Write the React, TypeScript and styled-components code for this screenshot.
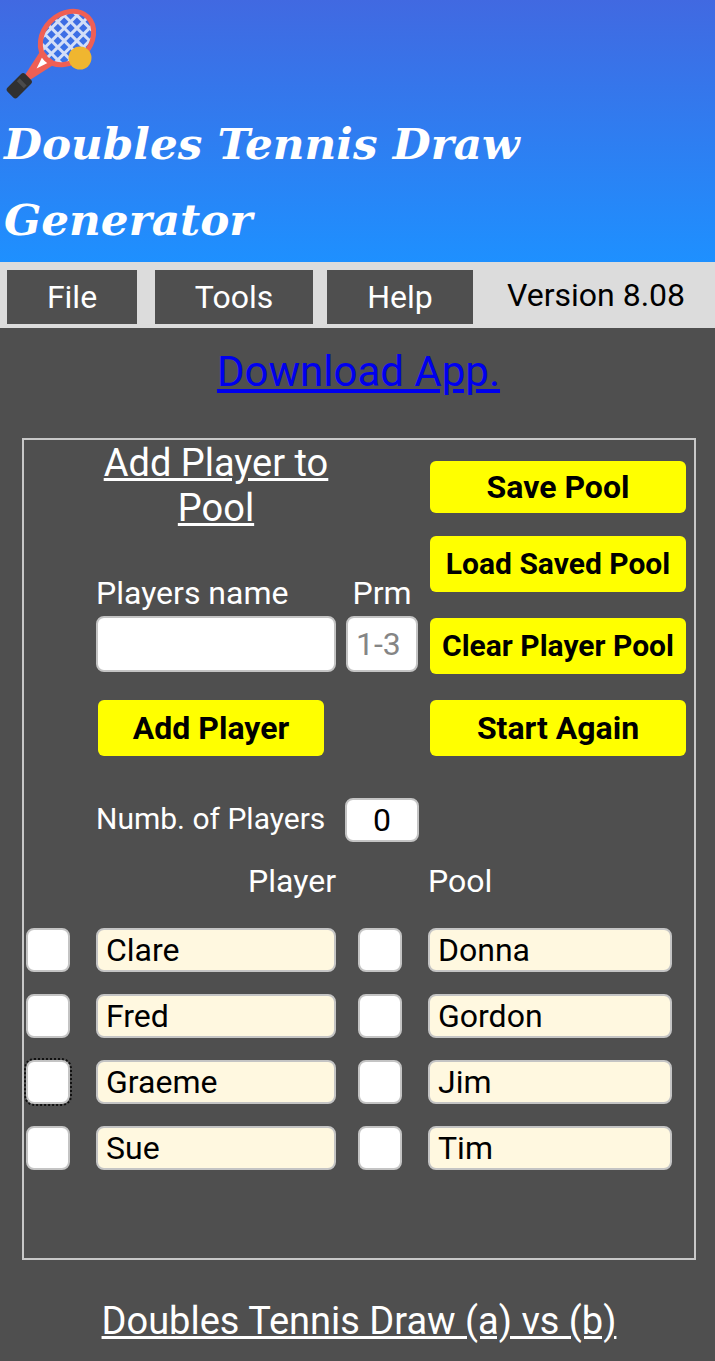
import React from "react";
import styled, { createGlobalStyle } from "styled-components";

const GlobalStyle = createGlobalStyle`
  html, body {
    margin: 0;
    padding: 0;
    background: #4f4f4f;
  }
  * {
    box-sizing: border-box;
  }
`;

const Page = styled.div`
  width: 715px;
  height: 1361px;
  overflow: hidden;
  background: #4f4f4f;
  font-family: Roboto, sans-serif;
  color: #fff;
`;

const Header = styled.header`
  height: 262px;
  padding: 6px 0 0 4px;
  background: linear-gradient(#4169e1, #1e90ff);
`;

const Logo = styled.svg`
  display: block;
  width: 100px;
  height: 94px;
  filter: blur(0.6px);
`;

const Title = styled.h1`
  margin: 6px 0 0;
  width: 600px;
  font-family: "DejaVu Serif", serif;
  font-size: 43.7px;
  font-weight: 700;
  font-style: italic;
  line-height: 76px;
  color: #fff;
`;

const MenuBar = styled.nav`
  display: flex;
  height: 66px;
  padding: 8px 0 0 7px;
  background: #dcdcdc;
`;

const MenuButton = styled.div<{ $width: number; $gap: number }>`
  display: flex;
  align-items: center;
  justify-content: center;
  width: ${({ $width }) => $width}px;
  height: 54px;
  margin-right: ${({ $gap }) => $gap}px;
  background: #4f4f4f;
  color: #fff;
  font-size: 32px;
`;

const Version = styled.div`
  margin: 0 0 0 34px;
  line-height: 50px;
  font-size: 32px;
  color: #000;
`;

const DownloadRow = styled.div`
  height: 110px;
  padding: 17px 0 0 2px;
  text-align: center;
`;

const DownloadLink = styled.a`
  font-size: 42px;
  line-height: 54px;
  color: #0000ee;
  text-decoration: underline;
`;

const Panel = styled.section`
  width: 674px;
  height: 822px;
  margin-left: 22px;
  border: 2px solid #c8c8c8;
`;

const TopArea = styled.div`
  display: flex;
  padding-left: 72px;
`;

const LeftColumn = styled.div`
  width: 322px;
`;

const PanelHeading = styled.h2`
  width: 240px;
  height: 130px;
  margin: 0;
  padding-top: 1px;
  font-size: 38px;
  font-weight: 400;
  line-height: 45px;
  text-align: center;
  text-decoration: underline;
`;

const NameGrid = styled.div`
  display: grid;
  grid-template-columns: 240px 72px;
  column-gap: 10px;
`;

const FieldLabel = styled.label<{ $center?: boolean }>`
  padding-top: 1px;
  font-size: 32px;
  line-height: 44px;
  height: 46px;
  text-align: ${({ $center }) => ($center ? "center" : "left")};
`;

const TextBox = styled.input<{ $tone?: "white" | "cream"; $center?: boolean }>`
  display: block;
  width: 100%;
  height: 100%;
  margin: 0;
  padding: 0 8px;
  border: 2px solid #c4c4c4;
  border-radius: 8px;
  outline: none;
  background: ${({ $tone }) => ($tone === "cream" ? "#fff8e0" : "#fff")};
  color: #000;
  font-family: Roboto, sans-serif;
  font-size: 32px;
  text-align: ${({ $center }) => ($center ? "center" : "left")};

  &::placeholder {
    color: #858585;
    opacity: 1;
  }
`;

const NameField = styled.div`
  height: 56px;
`;

const YellowButton = styled.button<{ $height?: number; $top?: number; $width?: number; $small?: boolean }>`
  display: block;
  width: ${({ $width }) => ($width ? `${$width}px` : "100%")};
  height: ${({ $height }) => $height ?? 56}px;
  margin: ${({ $top }) => $top ?? 26}px 0 0;
  padding: 0 0 ${({ $small }) => ($small ? 2 : 0)}px;
  border: none;
  border-radius: 6px;
  background: #ffff00;
  color: #000;
  font-family: Roboto, sans-serif;
  font-size: ${({ $small }) => ($small ? 30 : 32)}px;
  font-weight: 700;
`;

const AddPlayerWrap = styled.div`
  padding-left: 2px;
`;

const RightColumn = styled.div`
  width: 256px;
  margin-left: 12px;
`;

const CountRow = styled.div`
  display: flex;
  align-items: center;
  height: 44px;
  margin: 42px 0 0 72px;
`;

const CountLabel = styled.div`
  width: 249px;
  padding-bottom: 4px;
  font-size: 30px;
`;

const CountBox = styled.div`
  width: 74px;
  height: 44px;
`;

const ColumnLabels = styled.div`
  display: grid;
  grid-template-columns: 312px 180px;
  height: 44px;
  margin-top: 17px;
  font-size: 32px;
  line-height: 44px;
`;

const PlayerLabel = styled.div`
  text-align: right;
`;

const PoolLabel = styled.div`
  padding-left: 92px;
  width: 300px;
`;

const PlayerGrid = styled.div`
  display: grid;
  grid-template-columns: 44px 244px 44px 248px;
  grid-auto-rows: 44px;
  column-gap: 22px;
  row-gap: 22px;
  margin: 25px 0 0 2px;
`;

const TickBox = styled.div<{ $focused?: boolean }>`
  width: 44px;
  height: 44px;
  border: 2px solid #c4c4c4;
  border-radius: 8px;
  background: #fff;
  outline: ${({ $focused }) => ($focused ? "2px dotted #111" : "none")};
  outline-offset: 0;
`;

const PlayerCell = styled.div`
  margin-left: 4px;
`;

const BottomHeading = styled.h2`
  margin: 34px 0 0;
  padding-left: 3px;
  font-size: 38px;
  font-weight: 400;
  line-height: 54px;
  text-align: center;
  text-decoration: underline;
`;

const rows = [
  { left: "Clare", right: "Donna" },
  { left: "Fred", right: "Gordon" },
  { left: "Graeme", right: "Jim", focused: true },
  { left: "Sue", right: "Tim" },
];

const RacketLogo = () => (
  <Logo viewBox="0 0 100 94">
    <defs>
      <clipPath id="racket-head">
        <ellipse cx="63" cy="32" rx="22" ry="28" />
      </clipPath>
    </defs>
    <g transform="rotate(45 63 32)">
      <path d="M53 58 L59.5 88 L66.5 88 L73 58 Z" fill="#ef5f54" />
      <path d="M59 63 L63 75 L67 63 Z" fill="#fff" />
      <g clipPath="url(#racket-head)" stroke="#d3def7" strokeWidth="3">
        <line x1="45" y1="0" x2="45" y2="64" />
        <line x1="54" y1="0" x2="54" y2="64" />
        <line x1="63" y1="0" x2="63" y2="64" />
        <line x1="72" y1="0" x2="72" y2="64" />
        <line x1="81" y1="0" x2="81" y2="64" />
        <line x1="38" y1="9" x2="88" y2="9" />
        <line x1="38" y1="18" x2="88" y2="18" />
        <line x1="38" y1="27" x2="88" y2="27" />
        <line x1="38" y1="36" x2="88" y2="36" />
        <line x1="38" y1="45" x2="88" y2="45" />
        <line x1="38" y1="54" x2="88" y2="54" />
      </g>
      <ellipse cx="63" cy="32" rx="23.5" ry="29.5" fill="none" stroke="#ef5f54" strokeWidth="5" />
      <rect x="56" y="87" width="14" height="25" rx="3" fill="#303030" />
      <rect x="58" y="94" width="10" height="4" fill="#4a4a4a" />
    </g>
    <circle cx="76" cy="52" r="11.5" fill="#f0b630" />
  </Logo>
);

export default function App() {
  return (
    <Page>
      <GlobalStyle />
      <Header>
        <RacketLogo />
        <Title>Doubles Tennis Draw Generator</Title>
      </Header>
      <MenuBar>
        <MenuButton $width={130} $gap={18}>File</MenuButton>
        <MenuButton $width={158} $gap={14}>Tools</MenuButton>
        <MenuButton $width={146} $gap={0}>Help</MenuButton>
        <Version>Version 8.08</Version>
      </MenuBar>
      <DownloadRow>
        <DownloadLink href="#">Download App.</DownloadLink>
      </DownloadRow>
      <Panel>
        <TopArea>
          <LeftColumn>
            <PanelHeading>Add Player to Pool</PanelHeading>
            <NameGrid>
              <FieldLabel>Players name</FieldLabel>
              <FieldLabel $center>Prm</FieldLabel>
              <NameField><TextBox /></NameField>
              <NameField><TextBox placeholder="1-3" /></NameField>
            </NameGrid>
            <AddPlayerWrap>
              <YellowButton $width={226} $top={28}>Add Player</YellowButton>
            </AddPlayerWrap>
          </LeftColumn>
          <RightColumn>
            <YellowButton $height={52} $top={21}>Save Pool</YellowButton>
            <YellowButton $top={23} $small>Load Saved Pool</YellowButton>
            <YellowButton $small>Clear Player Pool</YellowButton>
            <YellowButton>Start Again</YellowButton>
          </RightColumn>
        </TopArea>
        <CountRow>
          <CountLabel>Numb. of Players</CountLabel>
          <CountBox><TextBox $center defaultValue="0" /></CountBox>
        </CountRow>
        <ColumnLabels>
          <PlayerLabel>Player</PlayerLabel>
          <PoolLabel>Pool</PoolLabel>
        </ColumnLabels>
        <PlayerGrid>
          {rows.map((row) => (
            <React.Fragment key={row.left}>
              <TickBox $focused={row.focused} />
              <PlayerCell><TextBox $tone="cream" defaultValue={row.left} /></PlayerCell>
              <TickBox />
              <PlayerCell><TextBox $tone="cream" defaultValue={row.right} /></PlayerCell>
            </React.Fragment>
          ))}
        </PlayerGrid>
      </Panel>
      <BottomHeading>Doubles Tennis Draw (a) vs (b)</BottomHeading>
    </Page>
  );
}
